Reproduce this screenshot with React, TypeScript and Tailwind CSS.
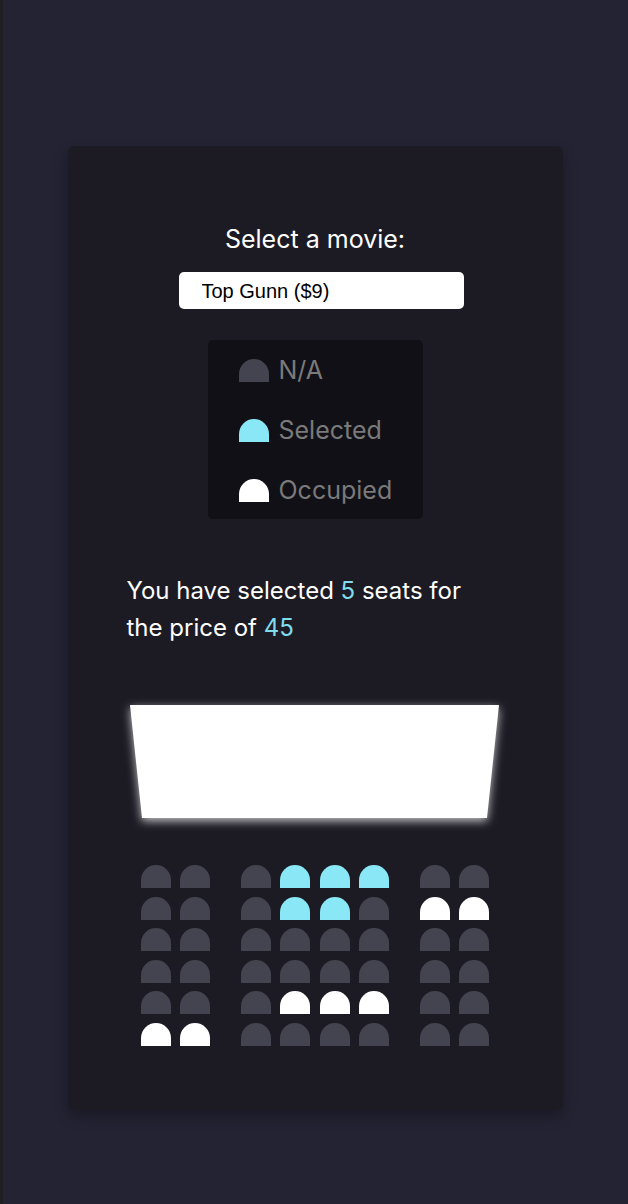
import React from "react";

type Seat = "n" | "s" | "o";

const rows: Seat[][] = [
  ["n", "n", "n", "s", "s", "s", "n", "n"],
  ["n", "n", "n", "s", "s", "n", "o", "o"],
  ["n", "n", "n", "n", "n", "n", "n", "n"],
  ["n", "n", "n", "n", "n", "n", "n", "n"],
  ["n", "n", "n", "o", "o", "o", "n", "n"],
  ["o", "o", "n", "n", "n", "n", "n", "n"],
];

const seatColor = {
  n: "bg-[#444451]",
  s: "bg-[#8ae7f5]",
  o: "bg-white",
};

const SeatBox = ({ kind, aisle }: { kind: Seat; aisle?: boolean }) => (
  <div
    className={`h-[23px] w-[30px] rounded-t-[15px] ${seatColor[kind]} ${
      aisle ? "mr-[22px]" : ""
    }`}
  />
);

const Legend = () => {
  const items: { kind: Seat; label: string }[] = [
    { kind: "n", label: "N/A" },
    { kind: "s", label: "Selected" },
    { kind: "o", label: "Occupied" },
  ];
  return (
    <ul className="mt-[31px] flex h-[179px] w-[215px] flex-col gap-[30px] rounded-[5px] bg-[#111016] pl-[31px] pt-[15px]">
      {items.map((item) => (
        <li key={item.label} className="flex h-[30px] items-center gap-[10px]">
          <div
            className={`h-[23px] w-[30px] rounded-t-[15px] ${seatColor[item.kind]}`}
          />
          <span className="text-[25px] leading-none text-[#7a7a7a]">
            {item.label}
          </span>
        </li>
      ))}
    </ul>
  );
};

const Screen = () => (
  <svg width="400" height="140" viewBox="0 0 400 140" className="mt-[47px]">
    <defs>
      <filter id="glow" x="-20%" y="-40%" width="140%" height="180%">
        <feGaussianBlur stdDeviation="5" />
      </filter>
    </defs>
    <polygon
      points="15,15 384,15 372,128 27,128"
      fill="rgba(255,255,255,0.75)"
      filter="url(#glow)"
    />
    <polygon points="15,12 384,12 372,125 27,125" fill="#ffffff" />
  </svg>
);

export default function App() {
  return (
    <div className="flex min-h-[1204px] w-full justify-center border-l-[3px] border-[#1e1e23] bg-[#242333] pr-[1px] pt-[146px] font-['Inter',sans-serif]">
      <div className="flex h-[964px] w-[495px] flex-col items-center rounded-md bg-[#1c1b24] shadow-[0_6px_14px_rgba(0,0,0,0.3)]">
        <label className="mt-[77px] text-[25px] leading-[32px] text-white">
          Select a movie:
        </label>
        <select
          defaultValue="9"
          className="ml-[12px] mt-[17px] h-[37px] w-[285px] appearance-none rounded-[5px] bg-white pl-[23px] font-['Liberation_Sans',Arial,sans-serif] text-[20px] text-black outline-none"
        >
          <option value="9">Top Gunn ($9)</option>
          <option value="10">Avengers: Endgame ($10)</option>
          <option value="12">Joker ($12)</option>
        </select>

        <Legend />

        <p className="mt-[53px] w-[377px] text-[24px] leading-[37px] text-white">
          You have selected <span className="text-[#7fdcec]">5</span> seats for
          the price of <span className="text-[#7fdcec]">45</span>
        </p>

        <Screen />

        <div className="mt-[32px] flex flex-col gap-[8.6px]">
          {rows.map((row, r) => (
            <div key={r} className="flex gap-[9.2px]">
              {row.map((kind, c) => (
                <SeatBox key={c} kind={kind} aisle={c === 1 || c === 5} />
              ))}
            </div>
          ))}
        </div>
      </div>
    </div>
  );
}
